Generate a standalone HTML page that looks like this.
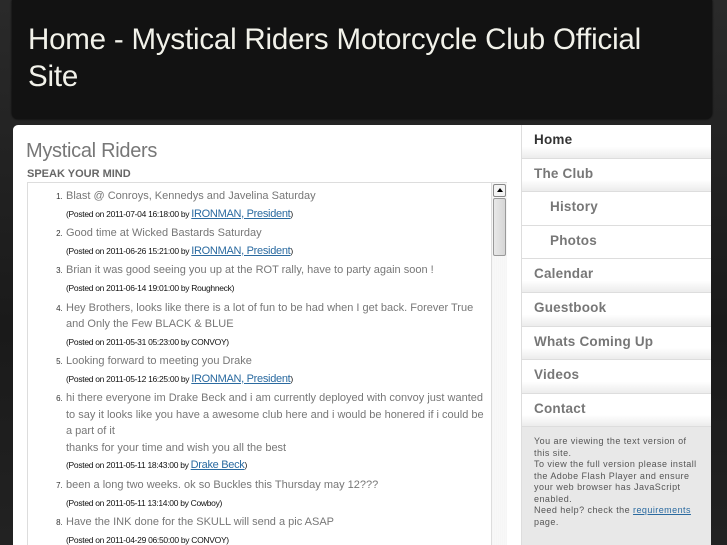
<!DOCTYPE html>
<html><head><meta charset="utf-8"><style>
*{margin:0;padding:0;box-sizing:border-box}
html,body{width:727px;height:545px;overflow:hidden}
body{background:linear-gradient(#2a2a2a,#1a1a1a 60%,#222);font-family:"Liberation Sans",sans-serif;position:relative}
.hdr{position:absolute;left:12px;top:0;width:700px;height:119px;background:#121212;border-radius:0 0 6px 6px;box-shadow:0 0 2px #000}
.hdr h1{position:absolute;left:16px;top:21px;width:690px;font-weight:normal;color:#f2f2ea;font-size:29.5px;line-height:37px;letter-spacing:-0.2px}
.main{position:absolute;left:13px;top:125px;width:698px;height:430px;background:#fff;border-radius:5px 5px 0 0}
.t{position:absolute;left:13px;top:15px;font-size:20px;color:#777;letter-spacing:-0.3px}
.s{position:absolute;left:14px;top:43px;font-size:11px;font-weight:bold;color:#666}
.box{position:absolute;left:14px;top:57px;width:480px;height:380px;border:1px solid #ddd;border-right:none;overflow:hidden}
.sb{position:absolute;right:0;top:0;width:16px;height:100%;background:repeating-linear-gradient(90deg,#f4f4f4,#fafafa 2px);border-left:1px solid #ddd}
.sb .up{position:absolute;left:1px;top:1px;width:13px;height:13px;border:1px solid #888;border-radius:2px;background:#f4f4f4}
.sb .up:after{content:"";position:absolute;left:3px;top:3px;border:3px solid transparent;border-bottom:4px solid #000;border-top:0}
.sb .th{position:absolute;left:1px;top:15px;width:13px;height:58px;border:1px solid #999;border-radius:2px;background:linear-gradient(90deg,#e8e8e8,#d6d6d6)}
ol{position:absolute;left:37px;top:5px;width:425px;color:#777;font-size:11px;line-height:16.5px}
li{margin-bottom:2.7px;padding-left:1px}
li::marker{font-size:8px;color:#333}
.p{display:block;font-size:8.5px;color:#111;line-height:18px;margin-top:0;letter-spacing:-0.3px}
.p a{color:#2a6aa0;font-size:11px;text-decoration:underline}
.nav{position:absolute;left:508px;top:0;width:190px;border-left:1px solid #ddd}
.nav .n{height:33.6px;border-bottom:1px solid #ddd;background:linear-gradient(#fff 65%,#ececec);font-size:13.5px;font-weight:bold;color:#777;padding:7px 12px;letter-spacing:0.2px}
.nav .n.h{color:#333}
.nav .n.i{padding-left:28px;background:#fff}
.info{background:#e8e8e8;padding:9px 12px;font-size:9px;line-height:11.5px;color:#555;height:140px;font-weight:normal;letter-spacing:0.45px}
.info a{color:#2a6aa0;text-decoration:underline}
</style></head><body>
<div class="hdr"><h1>Home - Mystical Riders Motorcycle Club Official<br>Site</h1></div>
<div class="main">
<div class="t">Mystical Riders</div>
<div class="s">SPEAK YOUR MIND</div>
<div class="box">
<ol>
<li>Blast @ Conroys, Kennedys and Javelina Saturday<span class="p">(Posted on 2011-07-04 16:18:00 by <a>IRONMAN, President</a>)</span></li>
<li>Good time at Wicked Bastards Saturday<span class="p">(Posted on 2011-06-26 15:21:00 by <a>IRONMAN, President</a>)</span></li>
<li>Brian it was good seeing you up at the ROT rally, have to party again soon !<span class="p">(Posted on 2011-06-14 19:01:00 by Roughneck)</span></li>
<li>Hey Brothers, looks like there is a lot of fun to be had when I get back. Forever True and Only the Few BLACK &amp; BLUE<span class="p">(Posted on 2011-05-31 05:23:00 by CONVOY)</span></li>
<li>Looking forward to meeting you Drake<span class="p">(Posted on 2011-05-12 16:25:00 by <a>IRONMAN, President</a>)</span></li>
<li>hi there everyone im Drake Beck and i am currently deployed with convoy just wanted to say it looks like you have a awesome club here and i would be honered if i could be a part of it<br>thanks for your time and wish you all the best<span class="p">(Posted on 2011-05-11 18:43:00 by <a>Drake Beck</a>)</span></li>
<li>been a long two weeks. ok so Buckles this Thursday may 12???<span class="p">(Posted on 2011-05-11 13:14:00 by Cowboy)</span></li>
<li>Have the INK done for the SKULL will send a pic ASAP<span class="p">(Posted on 2011-04-29 06:50:00 by CONVOY)</span></li>
</ol>
<div class="sb"><div class="up"></div><div class="th"></div></div>
</div>
<div class="nav">
<div class="n h">Home</div><div class="n">The Club</div><div class="n i">History</div><div class="n i">Photos</div><div class="n">Calendar</div><div class="n">Guestbook</div><div class="n">Whats Coming Up</div><div class="n">Videos</div><div class="n">Contact</div>
<div class="info">You are viewing the text version of this site.<br>To view the full version please install the Adobe Flash Player and ensure your web browser has JavaScript enabled.<br>Need help? check the <a>requirements</a> page.</div>
</div>
</div>
</body></html>
